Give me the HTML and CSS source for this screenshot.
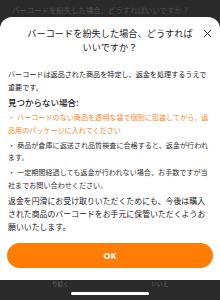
FILE: index.html
```html
<!DOCTYPE html>
<html lang="ja">
<head>
<meta charset="utf-8">
<link rel="stylesheet" href="styles.css">
</head>
<body>
<div class="screen">
  <div class="behind">バーコードを紛失した場合、どうすればいいですか？</div>
  <div class="sheet">
    <div class="head">
      <div class="title">バーコードを紛失した場合、どうすれば<br>いいですか？</div>
      <svg class="close" viewBox="0 0 10 10" width="9" height="9"><path d="M1 1L9 9M9 1L1 9" stroke="#333" stroke-width="1.1" fill="none"/></svg>
    </div>
    <p class="intro">バーコードは返品された商品を特定し、返金を処理するうえで重要です。</p>
    <h2 class="sub">見つからない場合:</h2>
    <ul class="list">
      <li class="hl">バーコードのない商品を透明な袋で個別に包装してから、返品用のパッケージに入れてください</li>
      <li>商品が倉庫に返送され品質検査に合格すると、返金が行われます。</li>
      <li>一定期間経過しても返金が行われない場合、お手数ですが当社までお問い合わせください。</li>
    </ul>
    <p class="outro">返金を円滑にお受け取りいただくためにも、今後は購入された商品のバーコードをお手元に保管いただくようお願いいたします。</p>
    <button class="ok">OK</button>
  </div>
  <div class="bottom">
    <div class="ghost"><span>り続く</span><span>いいえ</span></div>
    <div class="home"></div>
  </div>
</div>
</body>
</html>
```
FILE: styles.css
```css
* { box-sizing: border-box; }
html, body { margin: 0; padding: 0; }
body {
  width: 220px;
  height: 300px;
  overflow: hidden;
  background: #2b2b2b;
  font-family: "Noto Sans CJK JP", "Noto Sans", sans-serif;
}
.screen { display: flex; flex-direction: column; height: 300px; }
.behind {
  height: 17px;
  padding: 5px 0 0 12px;
  font-size: 7.4px;
  line-height: 10px;
  color: #4d4d4d;
  white-space: nowrap;
  overflow: hidden;
}
.sheet {
  background: #fff;
  border-radius: 12px 12px 0 0;
  height: 263px;
  padding: 0 8px;
  display: flex;
  flex-direction: column;
}
.head {
  position: relative;
  padding-top: 9px;
  height: 51px;
}
.title {
  text-align: center;
  font-size: 9.2px;
  line-height: 14px;
  color: #222;
  padding: 0 18px;
}
.close { position: absolute; right: 0; top: 12px; }
.intro {
  margin: 0;
  font-size: 7.1px;
  line-height: 13px;
  color: #222;
}
.sub {
  margin: 2px 0 2px;
  font-size: 8.5px;
  line-height: 13px;
  font-weight: 500;
  color: #222;
}
.list {
  list-style: none;
  margin: 0;
  padding: 0;
}
.list li {
  font-size: 7.1px;
  line-height: 12.5px;
  color: #333;
  margin-bottom: 2.5px;
}
.list li::before { content: "・"; margin-right: 2px; }
.list li.hl { color: #f5892a; }
.outro {
  margin: 0.25px 0 0;
  font-size: 7.9px;
  line-height: 13px;
  color: #222;
}
.ok {
  margin: auto -1px 12px;
  height: 25px;
  border: none;
  border-radius: 13px;
  background: #ff7d05;
  color: #fff;
  font-family: "Noto Sans", sans-serif;
  font-weight: 700;
  font-size: 9px;
  padding: 0;
}
.bottom {
  flex: 1;
  background: #2b2b2b;
  display: flex;
  flex-direction: column;
  align-items: center;
}
.ghost {
  width: 100%;
  display: flex;
  justify-content: space-between;
  font-size: 5.5px;
  color: #666;
  line-height: 8px;
  padding: 0 52px;
}
.home {
  width: 78px;
  height: 3px;
  border-radius: 2px;
  background: #fff;
  margin-top: 4px;
}
```
